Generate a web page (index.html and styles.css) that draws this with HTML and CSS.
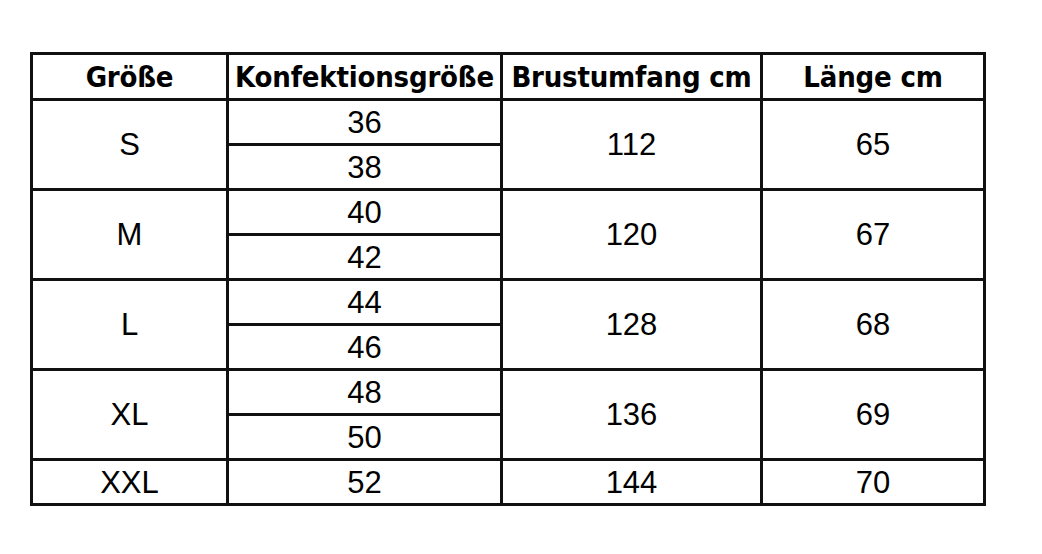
FILE: index.html
```html
<!DOCTYPE html>
<html lang="de">
<head>
<meta charset="utf-8">
<title>Größentabelle</title>
<link rel="stylesheet" href="styles.css">
</head>
<body>
<table class="size-table">
  <colgroup>
    <col class="c1"><col class="c2"><col class="c3"><col class="c4">
  </colgroup>
  <thead>
    <tr class="head"><th>Größe</th><th>Konfektionsgröße</th><th>Brustumfang cm</th><th>Länge cm</th></tr>
  </thead>
  <tbody>
    <tr><td rowspan="2" class="grp">S</td><td>36</td><td rowspan="2" class="grp">112</td><td rowspan="2" class="grp">65</td></tr>
    <tr><td>38</td></tr>
    <tr><td rowspan="2" class="grp">M</td><td>40</td><td rowspan="2" class="grp">120</td><td rowspan="2" class="grp">67</td></tr>
    <tr><td>42</td></tr>
    <tr><td rowspan="2" class="grp">L</td><td>44</td><td rowspan="2" class="grp">128</td><td rowspan="2" class="grp">68</td></tr>
    <tr><td>46</td></tr>
    <tr><td rowspan="2" class="grp">XL</td><td>48</td><td rowspan="2" class="grp">136</td><td rowspan="2" class="grp">69</td></tr>
    <tr><td>50</td></tr>
    <tr><td>XXL</td><td>52</td><td>144</td><td>70</td></tr>
  </tbody>
</table>
</body>
</html>
```

FILE: styles.css
```css
html, body {
  margin: 0;
  background: #fff;
}
body {
  padding: 52px 0 0 30px;
}
.size-table {
  border-collapse: collapse;
  table-layout: fixed;
  width: 953px;
  color: #000;
}
.c1 { width: 196px; }
.c2 { width: 274px; }
.c3 { width: 260px; }
.c4 { width: 223px; }
.size-table th,
.size-table td {
  border: 3px solid #111;
  padding: 0;
  text-align: center;
  vertical-align: middle;
  white-space: nowrap;
  overflow: visible;
}
.size-table th {
  height: 43px;
  font-family: "Liberation Sans Narrow", "DejaVu Sans Condensed", "Liberation Sans", sans-serif;
  font-weight: bold;
  font-size: 29px;
  letter-spacing: -0.2px;
}
.size-table td {
  height: 42px;
  font-family: "Liberation Sans", Arial, sans-serif;
  font-size: 31px;
  line-height: 1;
}
```
